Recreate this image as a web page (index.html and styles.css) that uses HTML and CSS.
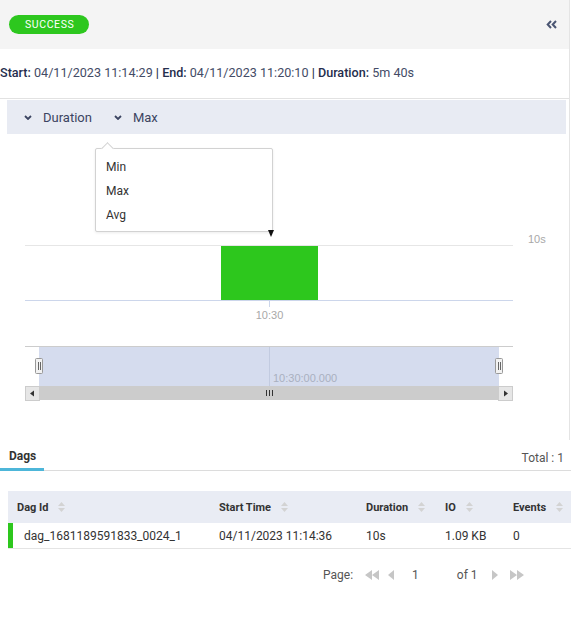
FILE: index.html
```html
<!DOCTYPE html>
<html lang="en">
<head>
<meta charset="utf-8">
<title>Query details</title>
<link rel="stylesheet" href="styles.css">
</head>
<body>
<div class="panel">
  <header class="header">
    <span class="badge">SUCCESS</span>
    <svg class="collapse" width="11" height="9" viewBox="0 0 11 9"><path d="M5 1 1.7 4.5 5 8M10 1 6.7 4.5 10 8" fill="none" stroke="currentColor" stroke-width="2"/></svg>
  </header>
  <div class="info">
    <span class="lbl">Start:</span>&nbsp;04/11/2023 11:14:29&nbsp;<span class="lbl">|</span>&nbsp;<span class="lbl">End:</span>&nbsp;04/11/2023 11:20:10&nbsp;<span class="lbl">|</span>&nbsp;<span class="lbl">Duration:</span>&nbsp;5m 40s
  </div>
  <div class="toolbar">
    <span class="select"><svg class="chev" width="8" height="5" viewBox="0 0 8 5"><path d="M1 1l3 3 3-3" fill="none" stroke="currentColor" stroke-width="1.8"/></svg>Duration</span>
    <span class="select"><svg class="chev" width="8" height="5" viewBox="0 0 8 5"><path d="M1 1l3 3 3-3" fill="none" stroke="currentColor" stroke-width="1.8"/></svg>Max</span>
  </div>
  <div class="chart">
    <svg class="plot" width="569" height="306" viewBox="0 0 569 306">
      <line x1="25" y1="111.5" x2="513" y2="111.5" stroke="#e6e6e6"/>
      <text x="528" y="109" class="axis-label">10s</text>
      <rect x="221" y="112" width="97" height="54" fill="#2dc71d"/>
      <line x1="25" y1="166.5" x2="513" y2="166.5" stroke="#ccd6eb"/>
      <line x1="269.5" y1="166" x2="269.5" y2="173" stroke="#ccd6eb"/>
      <text x="269.5" y="185" text-anchor="middle" class="axis-label">10:30</text>
      <rect x="39" y="213" width="460" height="39" fill="#d5dcee"/>
      <line x1="25" y1="212.5" x2="513" y2="212.5" stroke="#cccccc"/>
      <line x1="269.5" y1="213" x2="269.5" y2="252" stroke="#c2cbe0"/>
      <text x="273" y="248" class="nav-label">10:30:00.000</text>
      <g class="handle">
        <rect x="35.5" y="224.5" width="7" height="15" rx="1" fill="#f2f2f2" stroke="#999"/>
        <line x1="38.5" y1="228" x2="38.5" y2="236" stroke="#666"/>
        <line x1="40.5" y1="228" x2="40.5" y2="236" stroke="#666"/>
      </g>
      <g class="handle">
        <rect x="495.5" y="224.5" width="7" height="15" rx="1" fill="#f2f2f2" stroke="#999"/>
        <line x1="498.5" y1="228" x2="498.5" y2="236" stroke="#666"/>
        <line x1="500.5" y1="228" x2="500.5" y2="236" stroke="#666"/>
      </g>
      <rect x="25" y="252" width="488" height="14" fill="#cccccc"/>
      <rect x="25.5" y="252.5" width="14" height="14" fill="#e6e6e6" stroke="#cccccc"/>
      <rect x="498.5" y="252.5" width="14" height="14" fill="#e6e6e6" stroke="#cccccc"/>
      <path d="M34 256.5v6l-4-3z" fill="#333"/>
      <path d="M504 256.5v6l4-3z" fill="#333"/>
      <line x1="266.5" y1="256" x2="266.5" y2="262" stroke="#333"/>
      <line x1="269.5" y1="256" x2="269.5" y2="262" stroke="#333"/>
      <line x1="272.5" y1="256" x2="272.5" y2="262" stroke="#333"/>
    </svg>
    <ul class="menu">
      <li>Min</li>
      <li>Max</li>
      <li>Avg</li>
    </ul>
    <span class="marker"></span>
  </div>
</div>

<div class="tabs">
  <span class="tab">Dags</span>
  <span class="total">Total : 1</span>
</div>

<div class="table">
  <div class="thead">
    <div class="th first">Dag Id<svg class="sort" width="7" height="10" viewBox="0 0 7 10"><path d="M0 4h7L3.5 0zM0 6h7L3.5 10z" fill="#d3d3d3"/></svg></div>
    <div class="th">Start Time<svg class="sort" width="7" height="10" viewBox="0 0 7 10"><path d="M0 4h7L3.5 0zM0 6h7L3.5 10z" fill="#d3d3d3"/></svg></div>
    <div class="th">Duration<svg class="sort" width="7" height="10" viewBox="0 0 7 10"><path d="M0 4h7L3.5 0zM0 6h7L3.5 10z" fill="#d3d3d3"/></svg></div>
    <div class="th">IO<svg class="sort" width="7" height="10" viewBox="0 0 7 10"><path d="M0 4h7L3.5 0zM0 6h7L3.5 10z" fill="#d3d3d3"/></svg></div>
    <div class="th">Events<svg class="sort" width="7" height="10" viewBox="0 0 7 10"><path d="M0 4h7L3.5 0zM0 6h7L3.5 10z" fill="#d3d3d3"/></svg></div>
  </div>
  <div class="trow">
    <div class="td first">dag_1681189591833_0024_1</div>
    <div class="td">04/11/2023 11:14:36</div>
    <div class="td">10s</div>
    <div class="td">1.09 KB</div>
    <div class="td">0</div>
  </div>
</div>

<div class="pager">
  <span class="page-label">Page:</span>
  <svg class="pg first-pg" width="14" height="10" viewBox="0 0 14 10"><path d="M7 0v10L0 5zM14 0v10L7 5z" fill="#c6c6c6"/></svg>
  <svg class="pg prev-pg" width="6" height="10" viewBox="0 0 6 10"><path d="M6 0v10L0 5z" fill="#c6c6c6"/></svg>
  <span class="page-num">1</span>
  <span class="page-of">of 1</span>
  <svg class="pg next-pg" width="6" height="10" viewBox="0 0 6 10"><path d="M0 0v10l6-5z" fill="#c6c6c6"/></svg>
  <svg class="pg last-pg" width="14" height="10" viewBox="0 0 14 10"><path d="M0 0v10l7-5zM7 0v10l7-5z" fill="#c6c6c6"/></svg>
</div>
</body>
</html>
```

FILE: styles.css
```css
* { box-sizing: border-box; }

body {
  margin: 0;
  width: 571px;
  font-family: Roboto, "Liberation Sans", Arial, sans-serif;
  color: #333;
  background: #fff;
}

.panel {
  width: 570px;
  border-right: 1px solid #e4e4e4;
}

.header {
  height: 49px;
  background: #f4f4f4;
  display: flex;
  align-items: center;
  justify-content: space-between;
  padding: 0 12px 0 9px;
}

.badge {
  display: inline-block;
  height: 19px;
  line-height: 19px;
  padding: 0 15px 0 16px;
  border-radius: 10px;
  background: #2dc71e;
  color: #fff;
  font-size: 10.5px;
  letter-spacing: 0.6px;
}

.collapse {
  color: #4a5572;
  display: block;
}

.info {
  height: 50px;
  border-bottom: 1px solid #e2e2e2;
  display: flex;
  align-items: center;
  font-size: 12.6px;
  color: #434b66;
  padding-bottom: 3px;
  white-space: nowrap;
}

.info .lbl {
  font-weight: 500;
  color: #252e4d;
}

.toolbar {
  margin: 1px 3px 0 7px;
  height: 34px;
  background: #e8ebf3;
  display: flex;
  align-items: center;
  padding-left: 17px;
  gap: 22px;
  font-size: 13px;
  color: #3b4461;
}

.select {
  display: flex;
  align-items: center;
  gap: 11px;
}

.chev { display: block; margin-top: 1px; }

.chart {
  position: relative;
  height: 306px;
}

.plot { display: block; }

.axis-label {
  font-family: "Liberation Sans", Arial, sans-serif;
  font-size: 11px;
  fill: #a8a8a8;
}

.nav-label {
  font-family: "Liberation Sans", Arial, sans-serif;
  font-size: 11px;
  fill: #a9b0c0;
}

.menu {
  position: absolute;
  left: 95px;
  top: 14px;
  width: 178px;
  height: 84px;
  margin: 0;
  padding: 6px 0 0 10px;
  list-style: none;
  background: #fff;
  border: 1px solid #d2d2d2;
  border-radius: 2px;
  box-shadow: 0 1px 3px rgba(0, 0, 0, 0.08);
  font-size: 12px;
  color: #333;
}

.menu::before {
  content: "";
  position: absolute;
  left: 7px;
  top: -5px;
  width: 8px;
  height: 8px;
  background: #fff;
  border-left: 1px solid #d2d2d2;
  border-top: 1px solid #d2d2d2;
  transform: rotate(45deg);
}

.menu li {
  line-height: 24px;
}

.marker {
  position: absolute;
  left: 268px;
  top: 96px;
  width: 0;
  height: 0;
  border-left: 3px solid transparent;
  border-right: 3px solid transparent;
  border-top: 7px solid #111;
}

.tabs {
  display: flex;
  justify-content: space-between;
  align-items: flex-end;
  border-bottom: 1px solid #dcdcdc;
  font-size: 12px;
}

.tab {
  padding: 9px 8px 5px 9px;
  line-height: 14px;
  font-weight: 700;
  color: #333;
  border-bottom: 3px solid #4db6d9;
  margin-bottom: -1px;
}

.total {
  padding: 0 7px 5px 0;
  line-height: 14px;
  color: #555;
}

.table {
  margin: 20px 0 0 8px;
  width: 563px;
}

.thead,
.trow {
  display: grid;
  grid-template-columns: 203px 147px 79px 68px 66px;
}

.thead {
  height: 32px;
  background: #e9ecf4;
}

.th {
  display: flex;
  align-items: center;
  padding-left: 8px;
  font-size: 11px;
  font-weight: 700;
  color: #333;
  white-space: nowrap;
}

.th.first { padding-left: 9px; }

.sort {
  display: block;
  margin-left: 10px;
}

.trow {
  height: 26px;
  border-bottom: 1px solid #e4e4e4;
}

.td {
  display: flex;
  align-items: center;
  padding-left: 8px;
  font-size: 12px;
  color: #333;
  white-space: nowrap;
}

.td.first {
  border-left: 5px solid #2dc71d;
  padding-left: 11px;
}

.pager {
  display: flex;
  align-items: center;
  margin-top: 19px;
  padding-left: 323px;
  height: 14px;
  font-size: 12px;
  color: #555;
}

.pg { display: block; }
.first-pg { margin-left: 12px; }
.prev-pg { margin-left: 9px; }
.page-num { margin-left: 18px; }
.page-of { margin-left: 38px; }
.next-pg { margin-left: 14px; }
.last-pg { margin-left: 12px; }
```
